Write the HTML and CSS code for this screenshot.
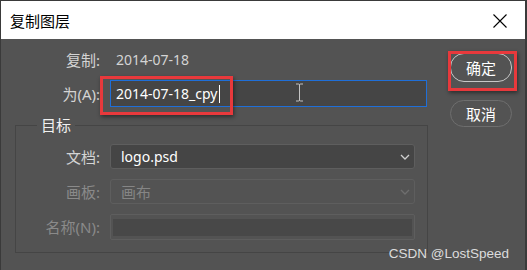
FILE: index.html
```html
<!DOCTYPE html>
<html lang="zh-CN">
<head>
  <meta charset="UTF-8">
  <meta name="viewport" content="width=device-width, initial-scale=1.0">
  <title>复制图层</title>
  <link rel="stylesheet" href="styles.css">
</head>
<body>
  <div class="window">
    <div class="titlebar">
      <span class="title">复制图层</span>
      <svg class="close" width="14" height="14" viewBox="0 0 14 14">
        <path d="M0.5 0.5 L13.5 13.5 M13.5 0.5 L0.5 13.5" stroke="#000" stroke-width="1.1" fill="none"/>
      </svg>
    </div>

    <div class="main">
      <div class="form">
        <div class="grid top-grid">
          <span class="lbl">复制:</span>
          <span class="value">2014-07-18</span>

          <label class="lbl" for="layerName">为(A):</label>
          <div class="input focused">
            <span class="input-text" id="layerName">2014-07-18_cpy</span><span class="caret"></span>
            <svg class="ibeam" width="9" height="19" viewBox="0 0 9 19">
              <path d="M1 1 H3.5 Q4.5 1 4.5 2 V17 Q4.5 18 3.5 18 H1 M8 1 H5.5 Q4.5 1 4.5 2 M4.5 17 Q4.5 18 5.5 18 H8" stroke="#c4c4c4" stroke-width="1" fill="none"/>
            </svg>
          </div>
        </div>

        <fieldset class="target">
          <legend>目标</legend>
          <div class="grid target-grid">
            <span class="lbl">文档:</span>
            <div class="select">
              <span>logo.psd</span>
              <svg class="chev" width="10" height="6" viewBox="0 0 10 6">
                <path d="M1 1 L5 5 L9 1" stroke="#d0d0d0" stroke-width="1.3" fill="none"/>
              </svg>
            </div>

            <span class="lbl disabled">画板:</span>
            <div class="select off">
              <span>画布</span>
              <svg class="chev" width="10" height="6" viewBox="0 0 10 6">
                <path d="M1 1 L5 5 L9 1" stroke="#6e6e6e" stroke-width="1.3" fill="none"/>
              </svg>
            </div>

            <span class="lbl disabled">名称(N):</span>
            <div class="field off"><div class="field-inner"></div></div>
          </div>
        </fieldset>
      </div>

      <div class="buttons">
        <button class="btn primary">确定</button>
        <button class="btn">取消</button>
      </div>
    </div>

    <div class="mark mark-input"></div>
    <div class="mark mark-ok"></div>
    <div class="watermark">CSDN @LostSpeed</div>
  </div>
</body>
</html>
```

FILE: styles.css
```css
body {
  margin: 0;
  padding: 0;
  background-color: #535353;
  font-family: "Noto Sans", "Noto Sans CJK SC", sans-serif;
}

.window {
  position: relative;
  width: 527px;
  height: 270px;
  box-sizing: border-box;
  border: 1px solid #3a3a3a;
  border-right-width: 2px;
  border-bottom: none;
  background-color: #535353;
  overflow: hidden;
}

.titlebar {
  height: 38px;
  background-color: #fff;
  display: flex;
  align-items: center;
  justify-content: space-between;
  padding: 0 18px 0 9px;
}

.title {
  font-family: "Noto Sans CJK SC", sans-serif;
  font-size: 15px;
  color: #000;
}

.close {
  margin-top: 2px;
}

.main {
  display: flex;
  padding: 8px 0 0 14px;
}

.form {
  width: 413px;
}

.grid {
  display: grid;
  align-items: center;
  column-gap: 7px;
}

.top-grid {
  grid-template-columns: 88px 317px;
  grid-template-rows: 25px 27px;
  row-gap: 8px;
}

.lbl {
  text-align: right;
  font-size: 15px;
  line-height: 20px;
  padding-right: 3px;
  color: #d4d4d4;
  white-space: nowrap;
}

.lbl.disabled {
  color: #8a8a8a;
}

.value {
  font-size: 14px;
  color: #d4d4d4;
  padding-left: 6px;
}

.input {
  position: relative;
  height: 27px;
  box-sizing: border-box;
  border: 1px solid #1f6fd8;
  background-color: #454545;
  display: flex;
  align-items: center;
  padding-left: 5px;
}

.input-text {
  font-size: 14px;
  color: #fff;
}

.caret {
  display: inline-block;
  width: 1px;
  height: 18px;
  margin-left: 1px;
  background-color: #fff;
}

.ibeam {
  position: absolute;
  left: 184px;
  top: 2px;
}

.target {
  margin: 8px 0 0 0;
  padding: 0 12px 12px 0;
  border: 1px solid #454545;
  min-width: 0;
}

.target legend {
  margin-left: 21px;
  padding: 0 4px;
  font-family: "Noto Sans CJK SC", sans-serif;
  font-size: 15px;
  line-height: 20px;
  color: #f0f0f0;
}

.target-grid {
  grid-template-columns: 87px 305px;
  grid-template-rows: 25px 25px 26px;
  row-gap: 10px;
  padding-top: 9px;
}

.select {
  height: 25px;
  box-sizing: border-box;
  border: 1px solid #5e5e5e;
  border-radius: 3px;
  background-color: #454545;
  display: flex;
  align-items: center;
  justify-content: space-between;
  padding: 0 4px 0 10px;
  font-size: 14px;
  color: #fff;
}

.select.off {
  background-color: #535353;
  color: #858585;
  font-family: "Noto Sans CJK SC", sans-serif;
  font-size: 15px;
}

.field {
  height: 26px;
  box-sizing: border-box;
  border: 1px solid #5e5e5e;
  border-radius: 2px;
  padding: 4px 2px 3px 2px;
}

.field-inner {
  height: 100%;
  background-color: #484848;
}

.buttons {
  display: flex;
  flex-direction: column;
  gap: 18px;
  margin: 6px 0 0 22px;
}

.btn {
  width: 62px;
  height: 27px;
  border: 1px solid #6e6e6e;
  border-radius: 14px;
  background: transparent;
  color: #fff;
  font-family: "Noto Sans CJK SC", sans-serif;
  font-size: 15px;
  line-height: 1;
  padding: 0;
}

.btn.primary {
  height: 29px;
  border: 1.5px solid #c8c8c8;
}

.mark {
  position: absolute;
  border: 3px solid #e8393c;
  box-shadow: 1px 2px 4px rgba(0, 0, 0, 0.45);
}

.mark-input {
  left: 99px;
  top: 75px;
  width: 127px;
  height: 33px;
}

.mark-ok {
  left: 447px;
  top: 50px;
  width: 63px;
  height: 34px;
}

.watermark {
  position: absolute;
  right: 16px;
  bottom: 9px;
  font-family: "Liberation Sans", sans-serif;
  font-size: 13.5px;
  color: #dcdcdc;
}
```
